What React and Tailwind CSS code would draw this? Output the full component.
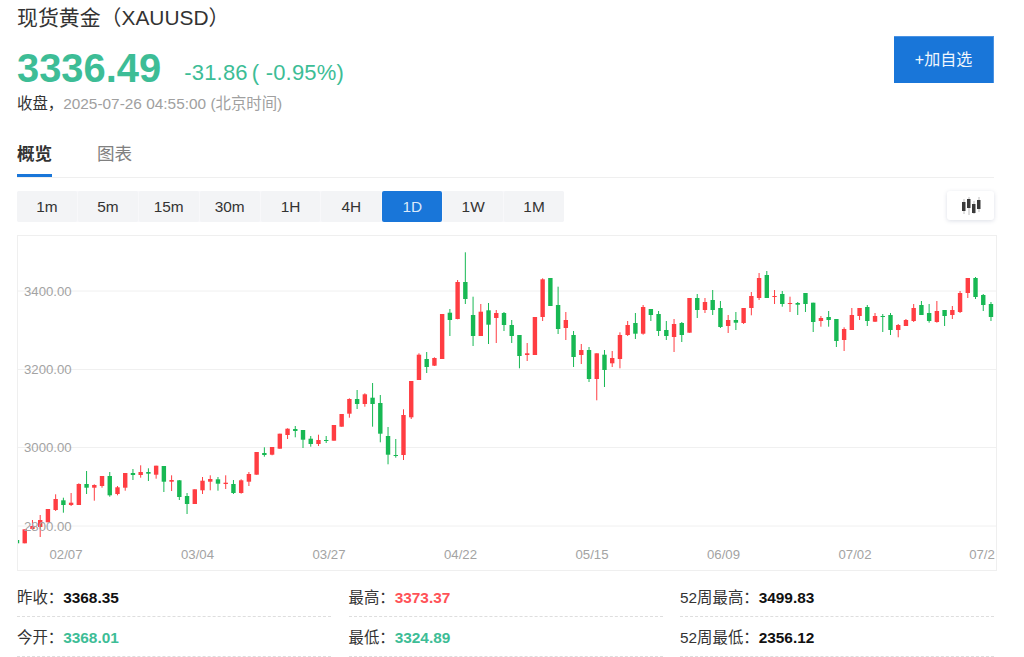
const candles = [
["g",540,540,543.3,543.3],["r",529.3,529.3,543.3,543.3],["r",520,526,529,530],["r",515,520,527,537],["r",509,509,522.3,522.3],["r",494.3,499,510,511],["g",497.7,500.3,505,512.7],["r",493,502.7,505,506],["r",483.3,484,505,505],["g",471,484,487.7,494],
["r",484.3,485,487.7,500.7],["r",476,476,486,487.7],["g",472,476,495.3,496.7],["r",486,487.3,494,495.3],["r",473,473,487.7,490.7],["g",469,473,475,480],["r",465.3,472,475,477.7],["g",468.3,472,473.7,481],["r",465.7,465.7,474.7,478.7],["g",466,466,481.7,492],
["r",475.3,480,481.7,491],["g",480,480.3,497,500],["g",493,496,504,514],["r",489.3,489.3,504,504],["r",477,480.7,490.3,494],["r",475.3,479,481.7,490.3],["g",477,479.3,483.7,490.7],["r",475.3,482.7,484,489],["g",480,484,493,494],["r",479.3,480.3,493,493.7],
["r",472,474,481.7,486],["r",452,452,474.7,474.7],["g",447.3,453,455,456.7],["r",447,447,454.7,455.3],["r",433.7,433.7,448.7,448.7],["r",428.3,428.7,435,439],["g",426,429,431,437.3],["g",430,430,439.7,448],["g",436,438.7,444,446.7],["r",434.7,440,444,446],
["g",436,440,441,443],["r",425,425,440.7,440.7],["r",414,414,426.7,426.7],["r",398.3,399,413.7,417.7],["g",390,399,404,409],["r",393.3,394.3,404,406.7],["g",383,397.7,404,426.7],["g",395,403,433.7,442.3],["g",427,436,454.7,464.3],["g",439,455,456,457.7],
["r",409.3,415,455,460],["r",381,381,417.3,419],["r",353.3,354.7,380,380],["g",352,359,367,373],["r",357.3,358,365.7,366],["r",314,314,359,359],["g",309,312.7,320,336],["r",280,282,319,319.3],["g",252.3,282,299,304],["g",296.7,315,336,346],
["r",304,311.7,336,336],["g",303,310.3,324.7,344],["r",310,313,318,343],["g",312,313,325,331],["g",320,325,336,343],["g",335,335,356,368.3],["r",343,353.3,355,361],["r",317,317,355,355],["r",278.3,279.3,317,321],["g",278,278,306,306],
["g",286.7,305,329,334],["r",312,320,328,340],["g",331,335,357,367],["r",344,350,355,364],["g",347,350,379,382],["r",353.3,353.3,379,400.3],["g",350,354.7,370,387],["r",351,358,363.3,367],["r",332.3,335,359,368.3],["r",321,325,335,336],
["g",313,323,333.7,339],["r",305,307,333.7,334.7],["g",309,309,315,321],["g",311,314,331,336],["g",321,330,336,340],["r",319,324,337,352],["g",322,323,335,342],["r",298,298,332.7,332.7],["g",294,298,310,318],["r",298,302,310,313],
["g",290,300,310,315],["g",301,308,327,328],["r",315,320,326,333],["g",312,320,322.7,330],["r",308,308,323,324],["r",292,296,308,315.3],["r",273,278,298,300],["g",271,275,298,298],["r",290,296,297,304],["g",291,294,304,306.7],
["r",296.7,303,303.7,312],["g",302,303,304.7,315],["g",293,293,304,312],["g",302.7,302.7,322,332],["r",316,318,321,326.7],["g",311,317,320,326.7],["g",319,319,341,347],["r",327.3,329,340,351],["r",308,315,330,330],["r",308,308,316,320],
["g",305,307,321,326],["r",313,316,321.7,322],["g",314,316,317,332],["g",313,315,330,335],["r",324,325,330,337.3],["r",319,320,326,326],["r",304,308,321,322],["g",301,305,315,315],["g",304,313,321,322.7],["r",301,311,322,322.7],
["g",310,310,316,326],["r",306,310,315,319],["r",291,293,312,313],["r",278,278,293,298],["g",277,278,297,299],["g",294,295,305,311],["g",302,304,317,321],
];

const grid = [
  { y: 291, label: "3400.00" },
  { y: 369.5, label: "3200.00" },
  { y: 447.5, label: "3000.00" },
  { y: 526, label: "2800.00" },
];
const dates = [["02/07", 66], ["03/04", 197.5], ["03/27", 329], ["04/22", 460.5], ["05/15", 592], ["06/09", 723.5], ["07/02", 855], ["07/2", 982]];
const frames = ["1m", "5m", "15m", "30m", "1H", "4H", "1D", "1W", "1M"];
const stats = [
  [["昨收：", "3368.35", "text-[#111111]"], ["今开：", "3368.01", "text-[#3dbd96]"]],
  [["最高：", "3373.37", "text-[#ff5257]"], ["最低：", "3324.89", "text-[#3dbd96]"]],
  [["52周最高：", "3499.83", "text-[#111111]"], ["52周最低：", "2356.12", "text-[#111111]"]],
];

function Chart() {
  return (
    <div className="mt-[13px] h-[336px] w-[980px] overflow-hidden border border-[#efefef]">
      <svg width="978" height="334" viewBox="18 236 978 334" className="block">
        {grid.map((g) => (
          <line key={g.y} x1="18" x2="996" y1={g.y} y2={g.y} stroke="#f0f0f0" strokeWidth="1" />
        ))}
        {candles.map(([c, wt, bt, bb, wb], i) => {
          const x = 17 + 7.73 * i;
          const color = c === "g" ? "#17b853" : "#ff3d42";
          return (
            <g key={i}>
              <line x1={x} x2={x} y1={wt} y2={wb} stroke={color} strokeWidth="1" />
              <rect x={x - 2.2} y={bt} width="4.4" height={Math.max(bb - bt, 1)} fill={color} />
            </g>
          );
        })}
        {grid.map((g) => (
          <text key={g.label} x="24" y={g.y + 4.5} fontSize="13.2" fill="#a3a3a3" fontFamily="Liberation Sans, sans-serif">{g.label}</text>
        ))}
        {dates.map(([d, x]) => (
          <text key={d} x={x} y="559" textAnchor="middle" fontSize="13.2" fill="#a3a3a3" fontFamily="Liberation Sans, sans-serif">{d}</text>
        ))}
      </svg>
    </div>
  );
}

export default function App() {
  return (
    <div className="h-[657px] w-[1024px] overflow-hidden bg-white pl-[17px] font-['Liberation_Sans','Noto_Sans_CJK_SC',sans-serif] text-[#333333]">
      <div className="flex w-[977px] items-start justify-between">
        <div>
          <h1 className="mt-[4px] h-[28px] text-[20.9px] leading-[28px] font-normal">现货黄金（XAUUSD）</h1>
          <div className="mt-[13px] flex h-[46px] items-center">
            <span className="text-[39.9px] leading-[46px] font-bold text-[#3dbd96]">3336.49</span>
            <span className="mt-[10px] ml-[23px] text-[22px] leading-[28px] tracking-[0.2px] text-[#3dbd96]">-31.86<span className="ml-[4px]">( -0.95%)</span></span>
          </div>
          <div className="mt-[3px] h-[20px] text-[15.4px] leading-[20px] text-[#a0a0a0]"><span className="text-[#333333]">收盘，</span>2025-07-26 04:55:00 (北京时间)</div>
        </div>
        <button className="mt-[36px] h-[47px] w-[100px] border border-[#4a93e4] border-b-0 border-l-0 bg-[#1976d9] text-[16px] text-[#f0f6fd]">+加自选</button>
      </div>

      <div className="mt-[27px] flex h-[37px] w-[977px] items-start gap-[45px] border-b border-[#efefef]">
        <div className="h-[36px] w-[35px] border-b-[3px] border-[#1976d9] text-[17.6px] leading-[26px] font-bold whitespace-nowrap">概览</div>
        <div className="text-[17.6px] leading-[26px] text-[#808080]">图表</div>
      </div>

      <div className="mt-[13px] flex h-[31px] w-[977px] items-start justify-between">
        <div className="grid w-[547px] grid-cols-9 gap-[1px] rounded-[2px] bg-[#f8f8fa]">
          {frames.map((f) => (
            <div key={f} className={f === "1D" ? "flex h-[31px] items-center justify-center rounded-[2px] bg-[#1976d9] text-[15.4px] text-[#dbe9fa]" : "flex h-[31px] items-center justify-center rounded-[2px] bg-[#f3f4f6] text-[15.4px] text-[#333333]"}>{f}</div>
          ))}
        </div>
        <div className="flex h-[29px] w-[47px] items-center justify-center rounded-[3px] bg-white shadow-[0_1px_4px_rgba(60,80,120,0.18)]">
          <svg width="20" height="18" viewBox="0 0 20 18">
            <g stroke="#bdbdbd" strokeWidth="1">
              <line x1="3" x2="3" y1="2" y2="17" /><line x1="8" x2="8" y1="0" y2="18" /><line x1="13" x2="13" y1="4" y2="17" /><line x1="18" x2="18" y1="0" y2="15" />
            </g>
            <g fill="#3a3a3a">
              <rect x="1" y="5" width="3.5" height="9" /><rect x="6" y="2" width="3.5" height="9" /><rect x="11" y="7" width="3.5" height="9" /><rect x="16" y="3" width="3.5" height="9" />
            </g>
          </svg>
        </div>
      </div>

      <Chart />

      <div className="mt-[6px] flex w-[977px] justify-between">
        {stats.map((col, i) => (
          <div key={i} className="w-[314px]">
            {col.map(([l, v, c]) => (
              <div key={l} className="flex h-[40px] items-center border-b border-dashed border-[#dedede] pt-[10px] pb-[8px] text-[15.4px]">
                <span className="text-[#333333]">{l}</span>
                <span className={"font-bold " + c}>{v}</span>
              </div>
            ))}
          </div>
        ))}
      </div>
    </div>
  );
}
